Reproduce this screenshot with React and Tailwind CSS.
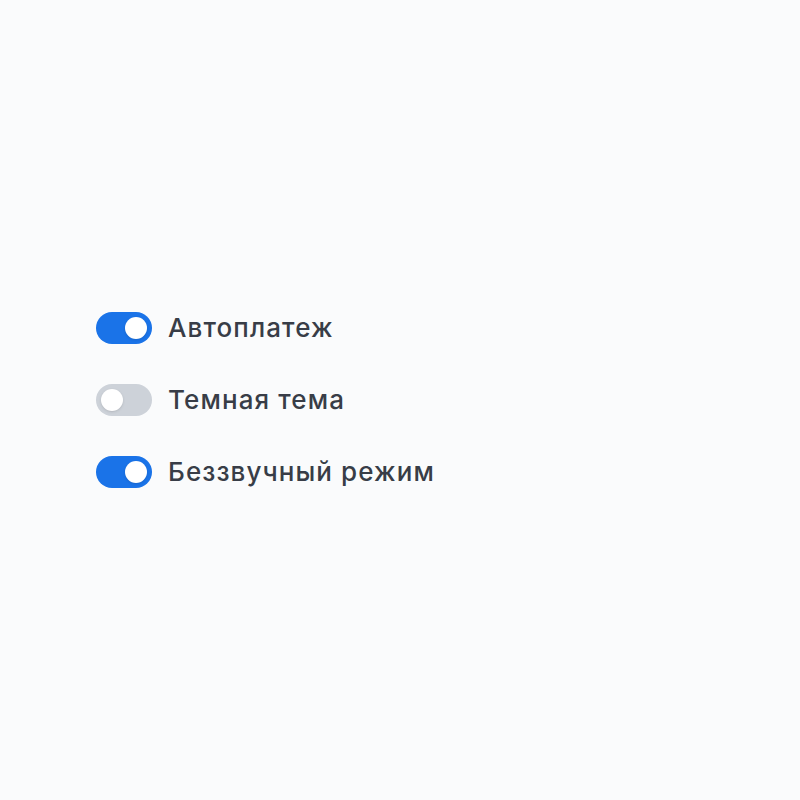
import { useState } from "react";

function Toggle({ label, defaultOn }) {
  const [on, setOn] = useState(defaultOn);

  return (
    <label className="flex items-center gap-4 cursor-pointer select-none">
      <button
        type="button"
        role="switch"
        aria-checked={on}
        onClick={() => setOn(!on)}
        className={`relative flex items-center w-14 h-8 rounded-full px-[5px] transition-colors
        ${on ? "bg-[#1a73e8] justify-end" : "bg-[#cdd2d9] justify-start"}`}
      >
        <span className="block w-[22px] h-[22px] rounded-full bg-white shadow-sm" />
      </button>
      <span className="text-[26px] leading-8 font-medium tracking-[1.1px] text-[#383d47]">{label}</span>
    </label>
  );
}

export default function App() {
  return (
    <div
      className="min-h-screen flex items-center bg-[#fafbfc] px-24"
      style={{ fontFamily: "Inter, 'Noto Sans', sans-serif" }}
    >
      <div className="flex flex-col gap-10">
        <Toggle label="Автоплатеж" defaultOn />
        <Toggle label="Темная тема" defaultOn={false} />
        <Toggle label="Беззвучный режим" defaultOn />
      </div>
    </div>
  );
}
